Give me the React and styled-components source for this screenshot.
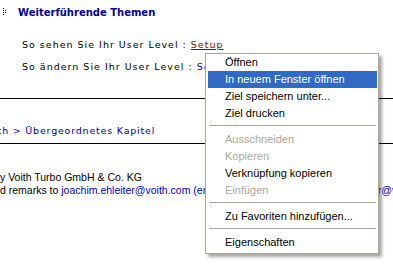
import React from 'react';
import styled, { createGlobalStyle } from "styled-components";

const GlobalStyle = createGlobalStyle`
    html, body {
        margin: 0;
        padding: 0;
        background: #fff;
        overflow: hidden;
    }
`

const menuItems = [
    { label: "Öffnen" },
    { label: "In neuem Fenster öffnen", active: true },
    { label: "Ziel speichern unter..." },
    { label: "Ziel drucken" },
    { separator: true },
    { label: "Ausschneiden", disabled: true },
    { label: "Kopieren", disabled: true },
    { label: "Verknüpfung kopieren" },
    { label: "Einfügen", disabled: true },
    { separator: true },
    { label: "Zu Favoriten hinzufügen..." },
    { separator: true },
    { label: "Eigenschaften" },
];

const GripIcon = () => (
    <svg width="6" height="10" viewBox="0 0 6 10">
        <g fill="#000">
            <rect x="0" y="1" width="1" height="1" />
            <rect x="0" y="3" width="1" height="1" />
            <rect x="0" y="5" width="1" height="1" />
            <rect x="0" y="7" width="1" height="1" />
            <rect x="2" y="3" width="1" height="1" />
            <rect x="2" y="5" width="1" height="1" />
        </g>
    </svg>
);

const App = () => {
  return(
      <Page>
        <GlobalStyle />
        <Heading>
            <GripIcon />
            <h2>Weiterführende Themen</h2>
        </Heading>

        <Levels>
            <p>So sehen Sie Ihr User Level : <LevelLink $color="#990000">Setup</LevelLink></p>
            <p>So ändern Sie Ihr User Level : <LevelLink $color="#0000cc" $plain>Setup</LevelLink></p>
        </Levels>

        <Rule $gap={20} />
        <Breadcrumb>Voith &gt; Übergeordnetes Kapitel</Breadcrumb>
        <Rule $gap={1} />

        <Footer>
            <p>y Voith Turbo GmbH &amp; Co. KG</p>
            <p>d remarks to <MailLink>joachim.ehleiter@voith.com (englisch) oder an sebastian.mayerhofer@voith.com</MailLink></p>
        </Footer>

        <Menu>
            {menuItems.map((item, i) =>
                item.separator
                    ? <Separator key={i} />
                    : <MenuItem key={i} $active={item.active} $disabled={item.disabled}>
                        {item.label}
                      </MenuItem>
            )}
        </Menu>
      </Page>
  )
};

export default App;

const Page = styled.div`
    position: relative;
    width: 393px;
    height: 271px;
    overflow: hidden;
    background: #fff;
`

const Heading = styled.div`
    display: flex;
    align-items: center;
    gap: 9px;
    height: 24px;
    padding-left: 3px;
    h2{
        margin: 0;
        font-family: "DejaVu Sans", Verdana, sans-serif;
        font-size: 10px;
        font-weight: bold;
        color: #000099;
    }
`

const Levels = styled.div`
    margin-top: 10px;
    padding-left: 22px;
    font-family: "DejaVu Sans", Verdana, sans-serif;
    font-size: 9.5px;
    letter-spacing: 1px;
    line-height: 22px;
    color: #000;
    white-space: nowrap;
    p{
        margin: 0;
    }
`

const LevelLink = styled.span`
    color: ${props => props.$color};
    text-decoration: ${props => props.$plain ? "none" : "underline"};
`

const Rule = styled.div`
    height: 1px;
    background: #000;
    margin-top: ${props => props.$gap}px;
`

const Breadcrumb = styled.div`
    margin-top: 21px;
    line-height: 22px;
    text-indent: -19px;
    font-family: "DejaVu Sans", Verdana, sans-serif;
    font-size: 9.5px;
    letter-spacing: 0.8px;
    color: #0000aa;
    white-space: nowrap;
`

const Footer = styled.div`
    margin-top: 27px;
    font-family: "Liberation Sans", Arial, sans-serif;
    font-size: 10.5px;
    line-height: 13px;
    color: #000;
    white-space: nowrap;
    p{
        margin: 0;
    }
`

const MailLink = styled.span`
    color: #0000cc;
`

const Menu = styled.div`
    position: absolute;
    left: 205px;
    top: 53px;
    width: 169px;
    padding: 0 1px 2px 2px;
    background: #fff;
    border: 1px solid #aca899;
    box-shadow: 3px 3px 3px rgba(0, 0, 0, 0.35);
    font-family: "Liberation Sans", Tahoma, sans-serif;
    font-size: 11px;
`

const MenuItem = styled.div`
    height: 17px;
    line-height: 17px;
    padding-left: 17px;
    white-space: nowrap;
    background: ${props => props.$active ? "#316ac5" : "transparent"};
    color: ${props => props.$active ? "#fff" : props.$disabled ? "#aca899" : "#000"};
`

const Separator = styled.div`
    height: 9px;
    display: flex;
    align-items: flex-start;
    padding: 3px 1px 0 1px;
    box-sizing: border-box;
    &::before{
        content: "";
        flex: 1;
        height: 1px;
        background: #aca899;
    }
`
